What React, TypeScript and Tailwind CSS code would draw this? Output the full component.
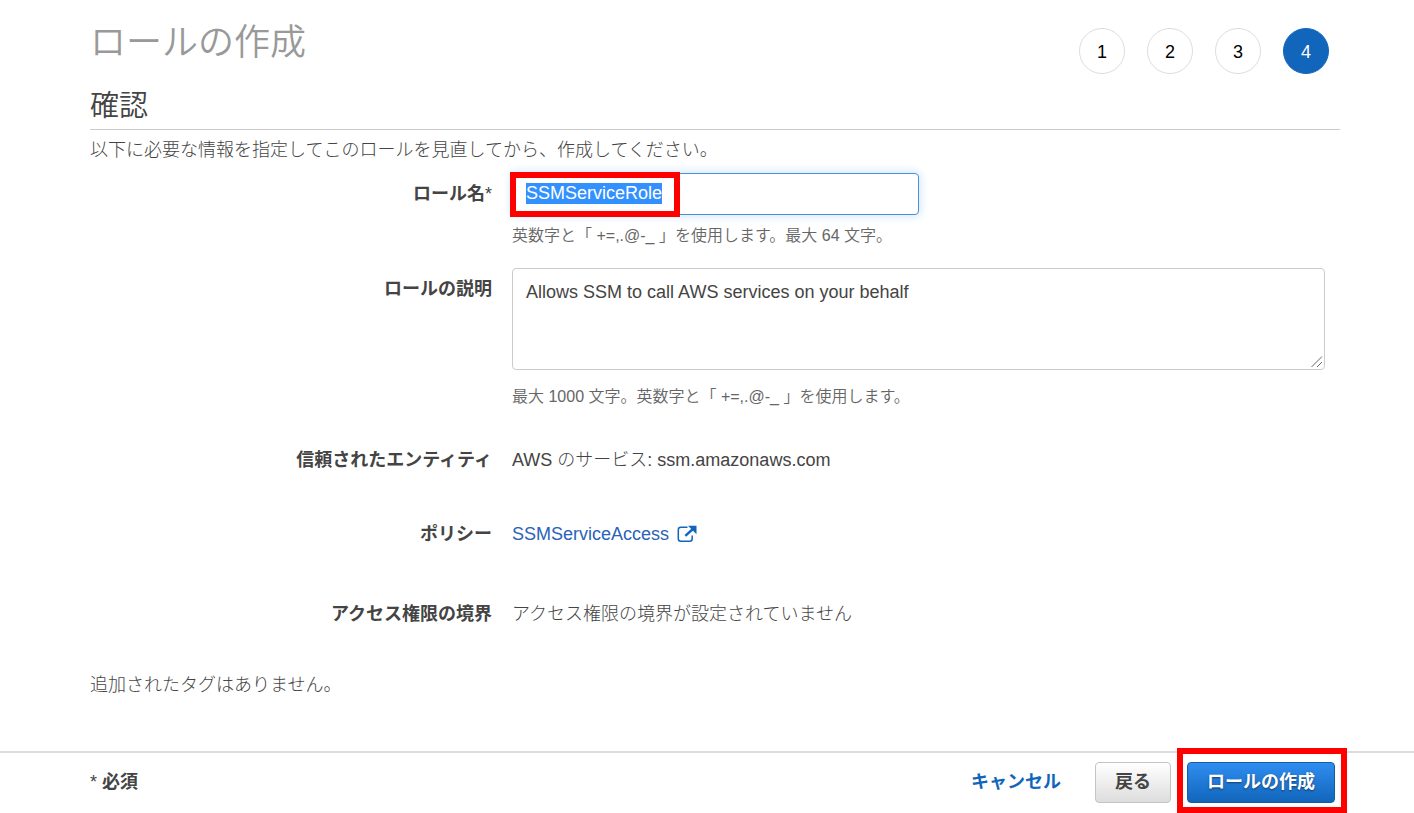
import { useEffect, useRef, useState } from "react"
import type { ReactNode } from "react"

const steps = [1, 2, 3, 4]
const currentStep = 4

function ExternalLinkIcon() {
  return (
    <svg width="20" height="18" viewBox="0 0 20 18" fill="none" aria-hidden="true">
      <path
        d="M10.5 2.3H3.8a2.5 2.5 0 0 0-2.5 2.5v9a2.5 2.5 0 0 0 2.5 2.5h8.9a2.5 2.5 0 0 0 2.5-2.5V10.5"
        stroke="#1166bb"
        strokeWidth="1.5"
      />
      <path d="M8.3 10.8L16.5 3.5" stroke="#1166bb" strokeWidth="2.4" />
      <path d="M11 .8h8.5v8.4z" fill="#1166bb" />
    </svg>
  )
}

function Row({ label, htmlFor, children }: { label: ReactNode; htmlFor?: string; children: ReactNode }) {
  const labelClass = "w-[402px] shrink-0 text-right font-bold leading-[42px]"

  return (
    <div className="flex gap-5 pr-[15px]">
      {htmlFor ? (
        <label htmlFor={htmlFor} className={labelClass}>
          {label}
        </label>
      ) : (
        <div className={labelClass}>{label}</div>
      )}
      <div className="min-w-0 flex-1 leading-[42px]">{children}</div>
    </div>
  )
}

export default function App() {
  const [roleName, setRoleName] = useState("SSMServiceRole")
  const [description, setDescription] = useState("Allows SSM to call AWS services on your behalf")
  const nameRef = useRef<HTMLInputElement>(null)

  useEffect(() => {
    nameRef.current?.focus()
    nameRef.current?.select()
  }, [])

  return (
    <div className="bg-white font-['Liberation_Sans','Noto_Sans_CJK_JP',sans-serif] text-[18px] font-light text-[#444444]">
      <main className="pl-[90px] pr-[74px] pb-[45px]">
        {/* Title and wizard steps */}
        <header className="flex h-[84px] items-start justify-between pt-5 pr-[11px]">
          <h1 className="text-[36px] leading-[46px] font-[350] text-[#999999]">ロールの作成</h1>
          <ol className="mt-2 flex gap-[22px]">
            {steps.map((step) => (
              <li
                key={step}
                aria-current={step === currentStep ? "step" : undefined}
                className={`flex size-[46px] items-center justify-center rounded-full border pt-0.5 ${
                  step === currentStep
                    ? "border-[#1166bb] bg-[#1166bb] text-white"
                    : "border-[#dddddd] bg-white text-black"
                }`}
              >
                {step}
              </li>
            ))}
          </ol>
        </header>

        <h2 className="border-b border-[#cccccc] pb-px text-[29px] leading-[44px] font-[350]">確認</h2>
        <p className="mb-[3px] leading-10">以下に必要な情報を指定してこのロールを見直してから、作成してください。</p>

        <form onSubmit={(e) => e.preventDefault()}>
          <Row
            label={
              <>
                ロール名<span className="font-normal">*</span>
              </>
            }
            htmlFor="role-name"
          >
            <div className="relative w-1/2">
              <input
                ref={nameRef}
                id="role-name"
                type="text"
                value={roleName}
                onChange={(e) => setRoleName(e.target.value)}
                className="block h-[42px] w-full rounded-[4px] border border-[#4a90d9] px-[13px] pb-0.5 leading-[22px] shadow-[0_0_8px_2px_#d5e8fa] outline-none selection:bg-[#3390ff] selection:text-white"
              />
              <div className="pointer-events-none absolute -top-px -left-0.5 h-[45px] w-[170px] border-6 border-[#ff0000]" />
            </div>
            <p className="mt-2 text-[16px] leading-[26px] font-[350] text-[#666666]">
              英数字と「 +=,.@-_ 」を使用します。最大 64 文字。
            </p>
          </Row>

          <div className="mt-[19px]">
            <Row label="ロールの説明" htmlFor="role-description">
              <div className="relative">
                <textarea
                  id="role-description"
                  value={description}
                  onChange={(e) => setDescription(e.target.value)}
                  className="block h-[102px] w-full resize-none rounded-[4px] border border-[#cccccc] px-[13px] py-[9px] leading-7 outline-none"
                />
                <svg
                  className="pointer-events-none absolute right-0.5 bottom-0.5"
                  width="12"
                  height="12"
                  viewBox="0 0 12 12"
                  stroke="#666666"
                  aria-hidden="true"
                >
                  <path d="M.5 11L11 .5M6 11l5-5" />
                </svg>
              </div>
              <p className="mt-[15px] text-[16px] leading-6 font-[350] text-[#666666]">
                最大 1000 文字。英数字と「 +=,.@-_ 」を使用します。
              </p>
            </Row>
          </div>

          <div className="mt-[30px]">
            <Row label="信頼されたエンティティ">AWS のサービス: ssm.amazonaws.com</Row>
          </div>

          <div className="mt-8">
            <Row label="ポリシー">
              <a href="#" className="inline-flex items-center gap-2 text-[#2a63b8]">
                SSMServiceAccess
                <ExternalLinkIcon />
              </a>
            </Row>
          </div>

          <div className="mt-[38px]">
            <Row label="アクセス権限の境界">アクセス権限の境界が設定されていません</Row>
          </div>
        </form>

        <p className="mt-[29px] leading-[42px]">追加されたタグはありません。</p>
      </main>

      {/* Action bar */}
      <footer className="flex items-center border-t-2 border-[#dddddd] pt-[9px] pr-[79px] pb-2.5 pl-[90px] leading-6 font-bold">
        <p className="mr-auto pb-0.5">
          <span className="font-normal">*</span> 必須
        </p>
        <a href="#" className="mr-[34px] pb-0.5 text-[#1166bb]">
          キャンセル
        </a>
        <button
          type="button"
          className="mr-4 h-[41px] rounded-[4px] border border-[#c4c4c4] bg-linear-to-b from-white to-[#dddddd] px-[19px] pb-0.5"
        >
          戻る
        </button>
        <div className="relative">
          <button
            type="button"
            className="block h-[41px] rounded-[4px] border border-[#1a5a9e] bg-linear-to-b from-[#2f8df0] to-[#1166bb] px-[19px] pb-0.5 text-white text-shadow-[0_1px_2px_#00000080]"
          >
            ロールの作成
          </button>
          <div className="pointer-events-none absolute -top-3.5 -right-3 -bottom-2.5 -left-2.5 border-6 border-[#ff0000]" />
        </div>
      </footer>
    </div>
  )
}
